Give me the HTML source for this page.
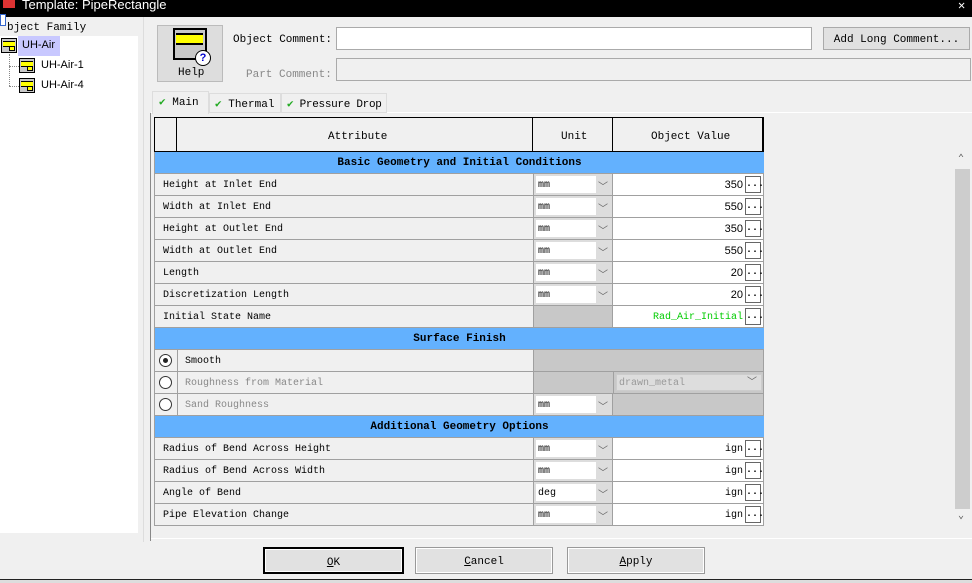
<!DOCTYPE html>
<html><head><style>
*{margin:0;padding:0;box-sizing:border-box}
body{width:972px;height:583px;background:#f0f0f0;position:relative;overflow:hidden;font-family:"Liberation Mono","DejaVu Sans Mono",monospace;font-size:10px;color:#000}
.a{position:absolute;white-space:nowrap}
.s{font-family:"Liberation Sans",sans-serif;font-size:11px}
.row{position:absolute;left:155px;width:609px;height:22px;border-bottom:1px solid #a0a0a0}
.blue{background:#63b1fe;font-weight:bold;text-align:center;line-height:23px;font-size:11px}
.lab{position:absolute;left:8px;top:6px;white-space:nowrap}
.unit{position:absolute;left:378px;top:0;width:80px;height:21px;border-left:1px solid #a0a0a0;border-right:1px solid #a0a0a0;background:#ddd}
.unit i{position:absolute;left:2px;top:2px;width:60px;height:17px;background:#fff;font-style:normal;padding-left:2px;line-height:19px;font-size:10px}
.unit b{position:absolute;right:4px;top:4px;font-weight:normal;color:#666;font-size:10px}
.val{position:absolute;left:458px;top:0;width:150px;height:21px;background:#fff}
.val span{position:absolute;right:20px;top:5px;font-family:"Liberation Sans",sans-serif;font-size:11px}
.dots{position:absolute;right:2px;top:2px;width:16px;height:17px;border:1px solid #666;background:#fff;font-size:10px;text-align:center;line-height:16px;font-weight:bold}
.btn{position:absolute;top:547px;height:27px;border:1px solid #999;background:#e1e1e1;text-align:center;line-height:28px;font-size:11px;box-shadow:inset 0 0 0 1px #fff}
.ico{position:absolute;width:16px;height:15px;border:1px solid #000;background:#c8c8c8}
.ico:before{content:"";position:absolute;left:1px;top:2px;width:12px;height:4px;background:#ff0;border-top:1px solid #000;border-bottom:1px solid #000}
.ico:after{content:"";position:absolute;right:1px;bottom:1px;width:4px;height:3px;background:#ff0;border:1px solid #000}
.radio{position:absolute;left:4px;top:4px;width:13px;height:13px;border:1px solid #333;border-radius:50%;background:#fff}
</style></head><body>
<div class="a" style="left:0;top:0;width:972px;height:17px;background:#000"></div>
<div class="a s" style="left:22px;top:-3px;color:#fff;font-size:13px">Template: PipeRectangle</div>
<div class="a" style="left:3px;top:0;width:12px;height:8px;background:#d33"></div>
<div class="a" style="left:958px;top:-2px;color:#fff;font-size:12px">✕</div>

<div class="a" style="left:0;top:17px;width:144px;height:525px;border-right:1px solid #ddd"></div>
<div class="a" style="left:0;top:36px;width:138px;height:497px;background:#fff"></div>
<div class="a" style="left:0;top:14px;width:6px;height:12px;background:#fff;border:1px solid #36c"></div>
<div class="a" style="left:7px;top:22px;font-size:11px">bject Family</div>
<div class="a" style="left:18px;top:36px;width:42px;height:20px;background:#c8c8ff"></div>
<div class="ico" style="left:1px;top:38px"></div>
<div class="a s" style="left:22px;top:39px">UH-Air</div>
<div class="a" style="left:9px;top:54px;height:32px;border-left:1px dotted #888"></div>
<div class="a" style="left:9px;top:66px;width:10px;border-top:1px dotted #888"></div>
<div class="a" style="left:9px;top:86px;width:10px;border-top:1px dotted #888"></div>
<div class="ico" style="left:19px;top:58px"></div>
<div class="a s" style="left:41px;top:59px">UH-Air-1</div>
<div class="ico" style="left:19px;top:78px"></div>
<div class="a s" style="left:41px;top:79px">UH-Air-4</div>

<div class="a" style="left:157px;top:25px;width:66px;height:57px;background:#ddd;border:1px solid #bbb"></div>
<div class="a" style="left:173px;top:28px;width:34px;height:32px;background:#c8c8c8;border:2px solid #000"></div>
<div class="a" style="left:176px;top:33px;width:27px;height:12px;background:#ff0;border-top:2px solid #000;border-bottom:2px solid #000"></div>
<div class="a" style="left:195px;top:50px;width:16px;height:16px;border-radius:50%;background:#fff;border:1px solid #000;color:#00c;font-weight:bold;font-size:11px;text-align:center;line-height:14px;font-family:'Liberation Sans',sans-serif">?</div>
<div class="a" style="left:178px;top:67px;font-size:11px">Help</div>
<div class="a" style="left:233px;top:34px;font-size:11px">Object Comment:</div>
<div class="a" style="left:246px;top:69px;font-size:11px;color:#888">Part Comment:</div>
<div class="a" style="left:336px;top:27px;width:476px;height:23px;background:#fff;border:1px solid #aaa"></div>
<div class="a" style="left:336px;top:58px;width:635px;height:23px;border:1px solid #aaa"></div>
<div class="a" style="left:823px;top:27px;width:147px;height:23px;background:#e1e1e1;border:1px solid #aaa;text-align:center;line-height:24px;font-size:11px">Add Long Comment...</div>

<div class="a" style="left:151px;top:112px;width:821px;border-top:1px solid #fff"></div>
<div class="a" style="left:152px;top:91px;width:57px;height:23px;background:#f0f0f0;border:1px solid #ddd;border-bottom:none;font-size:11px;line-height:22px;padding-left:6px"><span style="color:#2a2">✔</span> Main</div>
<div class="a" style="left:209px;top:93px;width:72px;height:20px;border:1px solid #ddd;font-size:11px;line-height:22px;padding-left:5px"><span style="color:#2a2">✔</span> Thermal</div>
<div class="a" style="left:281px;top:93px;width:106px;height:20px;border:1px solid #ddd;font-size:11px;line-height:22px;padding-left:5px;letter-spacing:-0.3px"><span style="color:#2a2">✔</span> Pressure Drop</div>
<div class="a" style="left:150px;top:113px;width:1px;height:428px;background:#888"></div>
<div class="a" style="left:151px;top:538px;width:821px;height:1px;background:#fff"></div>

<div class="a" style="left:154px;top:117px;width:610px;height:35px;border:1px solid #000;border-right:2px solid #000;background:#f0f0f0"></div>
<div class="a" style="left:176px;top:117px;width:1px;height:35px;background:#000"></div>
<div class="a" style="left:532px;top:117px;width:1px;height:35px;background:#000"></div>
<div class="a" style="left:612px;top:117px;width:1px;height:35px;background:#000"></div>
<div class="a" style="left:328px;top:131px;font-size:11px">Attribute</div>
<div class="a" style="left:561px;top:131px;font-size:11px">Unit</div>
<div class="a" style="left:651px;top:131px;font-size:11px">Object Value</div>
<div class="a" style="left:154px;top:152px;width:1px;height:374px;background:#a0a0a0"></div>
<div class="a" style="left:763px;top:152px;width:1px;height:374px;background:#a0a0a0"></div>

<div class="row blue" style="top:152px">Basic Geometry and Initial Conditions</div>
<div class="row" style="top:174px"><span class="lab">Height at Inlet End</span><div class="unit"><i>mm</i><b>﹀</b></div><div class="val"><span>350</span><div class="dots">...</div></div></div>
<div class="row" style="top:196px"><span class="lab">Width at Inlet End</span><div class="unit"><i>mm</i><b>﹀</b></div><div class="val"><span>550</span><div class="dots">...</div></div></div>
<div class="row" style="top:218px"><span class="lab">Height at Outlet End</span><div class="unit"><i>mm</i><b>﹀</b></div><div class="val"><span>350</span><div class="dots">...</div></div></div>
<div class="row" style="top:240px"><span class="lab">Width at Outlet End</span><div class="unit"><i>mm</i><b>﹀</b></div><div class="val"><span>550</span><div class="dots">...</div></div></div>
<div class="row" style="top:262px"><span class="lab">Length</span><div class="unit"><i>mm</i><b>﹀</b></div><div class="val"><span>20</span><div class="dots">...</div></div></div>
<div class="row" style="top:284px"><span class="lab">Discretization Length</span><div class="unit"><i>mm</i><b>﹀</b></div><div class="val"><span>20</span><div class="dots">...</div></div></div>
<div class="row" style="top:306px"><span class="lab">Initial State Name</span><div class="unit" style="background:#c8c8c8"></div><div class="val"><span style="font-family:'Liberation Mono',monospace;font-size:10px;color:#0c0;top:6px">Rad_Air_Initial</span><div class="dots">...</div></div></div>
<div class="row blue" style="top:328px">Surface Finish</div>
<div class="row" style="top:350px"><div class="radio"><div style="position:absolute;left:3px;top:3px;width:5px;height:5px;border-radius:50%;background:#222"></div></div><div class="a" style="left:22px;top:0;width:1px;height:22px;background:#a0a0a0"></div><span class="lab" style="left:30px">Smooth</span><div class="a" style="left:378px;top:0;width:230px;height:21px;background:#c8c8c8;border-left:1px solid #a0a0a0"></div></div>
<div class="row" style="top:372px"><div class="radio"></div><div class="a" style="left:22px;top:0;width:1px;height:22px;background:#a0a0a0"></div><span class="lab" style="left:30px;color:#888">Roughness from Material</span><div class="a" style="left:378px;top:0;width:80px;height:21px;background:#c8c8c8;border-left:1px solid #a0a0a0"></div><div class="a" style="left:458px;top:0;width:150px;height:21px;background:#c8c8c8;border-left:1px solid #a0a0a0"><div class="a" style="left:2px;top:2px;width:146px;height:17px;background:#ddd;border:1px solid #ccc;color:#999;padding-left:2px;line-height:17px">drawn_metal<span style="position:absolute;right:4px;color:#666">﹀</span></div></div></div>
<div class="row" style="top:394px"><div class="radio"></div><div class="a" style="left:22px;top:0;width:1px;height:22px;background:#a0a0a0"></div><span class="lab" style="left:30px;color:#888">Sand Roughness</span><div class="unit"><i>mm</i><b>﹀</b></div><div class="a" style="left:458px;top:0;width:150px;height:21px;background:#c8c8c8"></div></div>
<div class="row blue" style="top:416px">Additional Geometry Options</div>
<div class="row" style="top:438px"><span class="lab">Radius of Bend Across Height</span><div class="unit"><i>mm</i><b>﹀</b></div><div class="val"><span style="font-family:'Liberation Mono',monospace;font-size:10px;top:6px">ign</span><div class="dots">...</div></div></div>
<div class="row" style="top:460px"><span class="lab">Radius of Bend Across Width</span><div class="unit"><i>mm</i><b>﹀</b></div><div class="val"><span style="font-family:'Liberation Mono',monospace;font-size:10px;top:6px">ign</span><div class="dots">...</div></div></div>
<div class="row" style="top:482px"><span class="lab">Angle of Bend</span><div class="unit"><i>deg</i><b>﹀</b></div><div class="val"><span style="font-family:'Liberation Mono',monospace;font-size:10px;top:6px">ign</span><div class="dots">...</div></div></div>
<div class="row" style="top:504px"><span class="lab">Pipe Elevation Change</span><div class="unit"><i>mm</i><b>﹀</b></div><div class="val"><span style="font-family:'Liberation Mono',monospace;font-size:10px;top:6px">ign</span><div class="dots">...</div></div></div>

<div class="a" style="left:955px;top:169px;width:15px;height:340px;background:#cdcdcd"></div>
<div class="a" style="left:958px;top:153px;font-size:10px;color:#555">⌃</div>
<div class="a" style="left:958px;top:510px;font-size:10px;color:#555">⌄</div>

<div class="btn" style="left:263px;width:141px;border:2px solid #000"><u>O</u>K</div>
<div class="btn" style="left:415px;width:138px"><u>C</u>ancel</div>
<div class="btn" style="left:567px;width:138px"><u>A</u>pply</div>
<div class="a" style="left:0;top:579px;width:972px;height:1px;background:#222"></div>
<div class="a" style="left:0;top:580px;width:972px;height:3px;background:#ddd"></div>
</body></html>
